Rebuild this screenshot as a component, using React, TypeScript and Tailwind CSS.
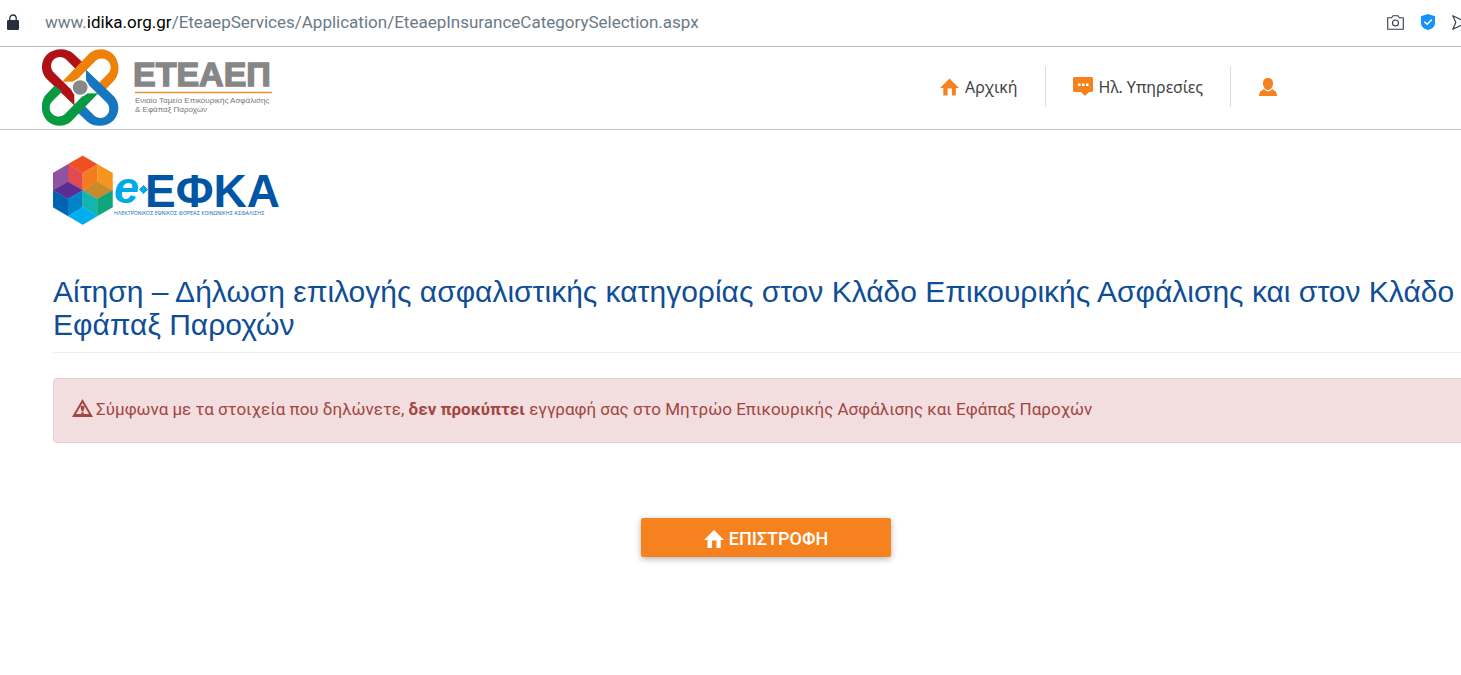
import React from "react";

function HomeIcon({ className }: { className: string }) {
  return (
    <svg viewBox="0 0 20 18" className={className} fill="currentColor" aria-hidden="true">
      <path d="M10 0 L0 10 H3.5 V18 H8 V10.5 H12.5 V18 H16.7 V10 H20 Z" />
    </svg>
  );
}

function AddressBar() {
  return (
    <div className="flex h-[47px] items-center border-b border-[#b4bbc1] pb-[2px] pl-[7px] font-['Roboto',sans-serif]">
      <svg viewBox="0 0 12 16" className="h-4 w-3 shrink-0" aria-hidden="true">
        <path d="M2.8 7V4.2a3.2 3.2 0 0 1 6.4 0V7" fill="none" stroke="#26303a" strokeWidth="1.3" />
        <rect x="0" y="6" width="12" height="10" rx="1.2" fill="#26303a" />
      </svg>
      <p className="ml-[26px] whitespace-nowrap text-[17px] leading-6 text-[#6b7a86]">
        www.<span className="text-black">idika.org.gr</span>
        /EteaepServices/Application/EteaepInsuranceCategorySelection.aspx
      </p>
      <div className="-mr-[7px] ml-auto flex shrink-0 items-center gap-[17px]">
        <svg viewBox="0 0 17 15" className="h-[15px] w-[17px]" fill="none" stroke="#333c45" strokeWidth="1.1" aria-hidden="true">
          <path d="M.7 2.8H4.6L6 .8h5l1.4 2H16.3V14.2H.7Z" strokeLinejoin="round" />
          <circle cx="8.5" cy="8" r="3" />
        </svg>
        <svg viewBox="0 0 14 16" className="h-4 w-[14px]" aria-hidden="true">
          <path d="M7 0 14 2.2V9.5C14 13 10.5 15 7 16 3.5 15 0 13 0 9.5V2.2Z" fill="#1592fb" />
          <path d="M3.3 7.7 6.2 10.3 10.8 5.4" fill="none" stroke="#fff" strokeWidth="1.5" />
        </svg>
        <svg viewBox="0 0 16 15" className="h-[15px] w-4" fill="none" stroke="#333c45" strokeWidth="1.2" strokeLinejoin="round" aria-hidden="true">
          <path d="M.8 .8 15 7.5 .8 14.2 3.8 7.5Z" />
        </svg>
      </div>
    </div>
  );
}

const strand =
  "M135 195 L50 113 C33 94 34 62 52 43 C73 22 112 21 132 40 L158 65 L140 87 L111 58 C99 46 81 48 72 59 C62 70 63 87 74 97 L134 156 Z";

function EteaepLogo() {
  return (
    <a href="#" className="flex items-start text-[#868686]">
      <svg viewBox="38 26 230 230" className="h-[77px] w-[77px] shrink-0" aria-hidden="true">
        <path d={strand} fill="#b01116" />
        <path d={strand} fill="#ee8208" transform="rotate(90 152 141)" />
        <path d={strand} fill="#1676bf" transform="rotate(180 152 141)" />
        <path d={strand} fill="#079a41" transform="rotate(270 152 141)" />
        <circle cx="152" cy="141" r="27" fill="#fff" />
        <circle cx="152" cy="141" r="22" fill="#888" />
      </svg>
      <svg viewBox="0 0 142 77" className="ml-[14px] h-[77px] w-[142px]" role="img" aria-label="ΕΤΕΑΕΠ">
        <text x="0" y="37" fontSize="34" fontWeight="700" fontFamily="Liberation Sans, sans-serif" fill="#868686" stroke="#868686" strokeWidth="1.4">ΕΤΕΑΕΠ</text>
        <path d="M2 43.5H139" stroke="#e98f35" strokeWidth="1.4" />
        <text x="2" y="54" fontSize="8" fontFamily="Liberation Sans, sans-serif" fill="#777">Ενιαίο Ταμείο Επικουρικής Ασφάλισης</text>
        <text x="2" y="63" fontSize="8" fontFamily="Liberation Sans, sans-serif" fill="#777">&amp; Εφάπαξ Παροχών</text>
      </svg>
    </a>
  );
}

function SiteHeader() {
  return (
    <header className="flex h-[83px] items-start border-b border-[#c5c5c5] pl-[42px] pt-[2px]">
      <EteaepLogo />
      <nav className="ml-auto mr-[184px] mt-[17px] flex h-[41px] items-center font-['Noto_Sans',sans-serif] text-base text-[#444]">
        <a href="#" className="flex items-center pr-[27px]">
          <HomeIcon className="mr-[6px] h-[18px] w-[19px] text-[#f6821f]" />
          <span>Αρχική</span>
        </a>
        <a href="#" className="flex h-full items-center border-l border-[#ddd] pl-[27px] pr-[27px]">
          <svg viewBox="0 0 20 19" className="mr-[6px] h-[19px] w-5" aria-hidden="true">
            <path d="M1.5 0H18.5Q20 0 20 1.5V13.5Q20 15 18.5 15H16L12 19 8 15H1.5Q0 15 0 13.5V1.5Q0 0 1.5 0Z" fill="#f6821f" />
            <path d="M5 6.5h2.500v2.500H5zM9 6.5h2.500v2.500H9zM13 6.5h2.500v2.500H13z" fill="#fff" />
          </svg>
          <span>Ηλ. Υπηρεσίες</span>
        </a>
        <a href="#" aria-label="Λογαριασμός" className="flex h-full items-center border-l border-[#ddd] pl-7">
          <svg viewBox="0 0 18 18" className="h-[18px] w-[18px]" fill="#f6821f" aria-hidden="true">
            <path d="M9 0C12.5 0 14 2.2 14 5.2 14 8.5 12 12 9 12S4 8.5 4 5.2C4 2.2 5.5 0 9 0Z" />
            <path d="M5 11.3Q9 15.5 13 11.3 18 12.6 18 18H0Q0 12.6 5 11.3Z" />
          </svg>
        </a>
      </nav>
    </header>
  );
}

const faces: [string, string][] = [
  ["128,32 172,58 128,84 84,58", "#f04e23"],
  ["84,58 128,84 128,136 84,110", "#df4b50"],
  ["172,58 128,84 128,136 172,110", "#f47c20"],
  ["39,84 84,58 84,110 39,136", "#8f53a1"],
  ["39,136 84,110 128,136 84,162", "#5b2c91"],
  ["218,84 172,58 172,110 218,136", "#f7941e"],
  ["172,110 218,136 172,162 128,136", "#c98a2c"],
  ["39,136 84,162 84,213 39,187", "#0063b0"],
  ["84,162 128,136 128,187 84,213", "#0083ca"],
  ["128,136 172,162 172,213 128,187", "#14b5b0"],
  ["172,162 218,136 218,187 172,213", "#11a57c"],
  ["84,213 128,187 172,213 128,239", "#00aeef"],
];

function EfkaLogo() {
  return (
    <svg viewBox="0 0 228 70" className="h-[70px] w-[228px]" role="img" aria-label="e-ΕΦΚΑ">
      <g transform="translate(-13 -10) scale(.3333)">
        {faces.map(([points, fill]) => (
          <polygon key={points} points={points} fill={fill} stroke={fill} strokeWidth="0.8" />
        ))}
      </g>
      <text x="61" y="48" fontSize="45" fontWeight="700" fontStyle="italic" fontFamily="Liberation Sans, sans-serif" fill="#00a8ec">e</text>
      <path d="M90.5 30.5 94.5 34.5 90.5 38.5 86.5 34.5Z" fill="#00a8ec" stroke="#00a8ec" strokeWidth="1" />
      <text x="92" y="52" fontSize="46" fontWeight="700" fontFamily="Liberation Sans, sans-serif" fill="#0056a4">ΕΦΚΑ</text>
      <text x="61" y="60" fontSize="5" fontFamily="Inter, sans-serif" fill="#2273b6">ΗΛΕΚΤΡΟΝΙΚΟΣ ΕΘΝΙΚΟΣ ΦΟΡΕΑΣ ΚΟΙΝΩΝΙΚΗΣ ΑΣΦΑΛΙΣΗΣ</text>
    </svg>
  );
}

export default function App() {
  return (
    <div className="min-h-screen overflow-hidden bg-white font-['Liberation_Sans',Arial,sans-serif]">
      <AddressBar />
      <SiteHeader />
      <main className="-mr-[18px] ml-[53px] flex flex-col pt-[25px]">
        <EfkaLogo />
        <h1 className="mt-[50px] border-b border-[#eee] pb-[11px] text-[30px] leading-[33px] text-[#0f4e96]">
          Αίτηση – Δήλωση επιλογής ασφαλιστικής κατηγορίας στον Κλάδο Επικουρικής Ασφάλισης και στον Κλάδο
          Εφάπαξ Παροχών
        </h1>
        <div role="alert" className="mt-[25px] flex h-[65px] items-center rounded border border-[#e6ccd1] bg-[#f2dede] pb-[2px] pl-[18px] font-['Roboto',sans-serif] text-[17px] text-[#a34543]">
          <svg viewBox="0 0 21 18" className="mb-[3px] mr-[3px] h-[18px] w-[21px] shrink-0" aria-hidden="true">
            <path fillRule="evenodd" d="M10.5 0 21 18H0ZM10.5 4 4 15H17Z" fill="#a34543" />
            <path d="M8.7 6.8h3.600v2.500l-1 3.200H9.700l-1-3.200ZM9.300 13.300h2.400v2.200H9.300Z" fill="#a34543" />
          </svg>
          <p>
            Σύμφωνα με τα στοιχεία που δηλώνετε, <strong>δεν προκύπτει</strong> εγγραφή σας στο Μητρώο
            Επικουρικής Ασφάλισης και Εφάπαξ Παροχών
          </p>
        </div>
        <button type="button" className="mt-[75px] flex h-[39px] w-[250px] items-center justify-center gap-[5px] self-center rounded-xs bg-[#f6821f] pt-[2px] font-['Roboto',sans-serif] text-lg font-medium text-white shadow-[0_2px_6px_rgba(0,0,0,0.3)]">
          <HomeIcon className="h-[18px] w-5" />
          ΕΠΙΣΤΡΟΦΗ
        </button>
      </main>
    </div>
  );
}
